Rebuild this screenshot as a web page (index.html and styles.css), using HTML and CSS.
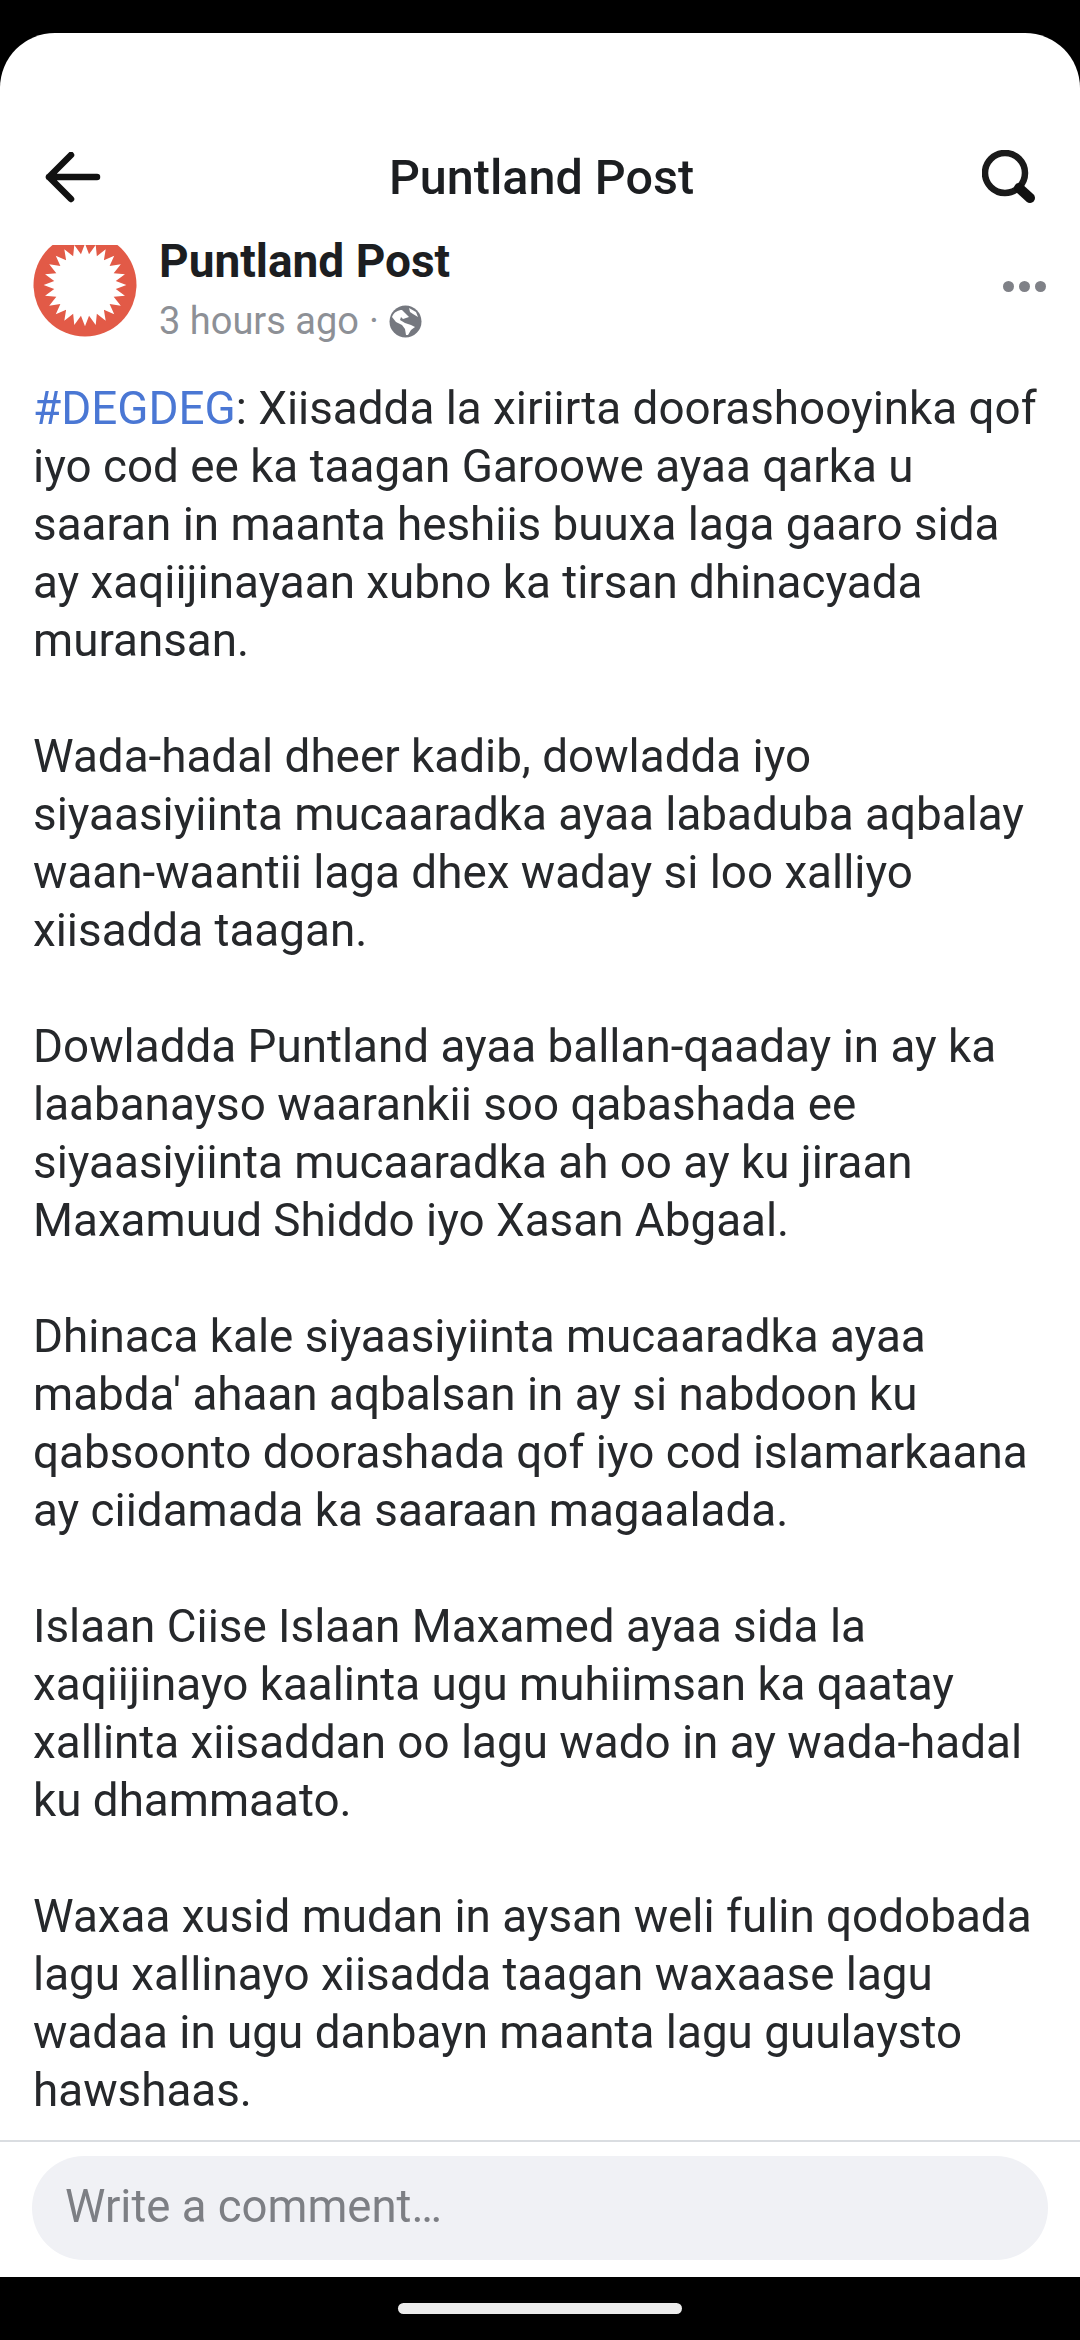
FILE: index.html
```html
<!DOCTYPE html>
<html lang="so">
<head>
<meta charset="utf-8">
<title>Puntland Post</title>
<link rel="stylesheet" href="styles.css">
</head>
<body>
<div class="phone">
  <div class="top-bar"></div>
  <main class="screen">
    <header class="nav">
      <svg class="nav-icon" width="56" height="52" viewBox="0 0 56 52"><path d="M4 25H52M26 3 4 25 26 47" fill="none" stroke="#111" stroke-width="6.500" stroke-linecap="round" stroke-linejoin="round"/></svg>
      <h1 class="nav-title">Puntland Post</h1>
      <svg class="nav-icon" width="54" height="56" viewBox="0 0 54 56"><circle cx="23" cy="23" r="20" fill="none" stroke="#1a1a1a" stroke-width="6.500"/><path d="M37 38 48 48" stroke="#111" stroke-width="10" stroke-linecap="round"/></svg>
    </header>
    <section class="author">
      <div class="avatar">
        <svg width="104" height="104" viewBox="-52 -52 104 104"><circle r="51.500" fill="#e25a47"/><polygon class="star" fill="#fff" points="44,0 32.700,4.300 42.500,11.400 30.500,12.600 38.100,22 26.200,20.100 31.100,31.100 20.100,26.200 22,38.100 12.600,30.500 11.400,42.500 4.300,32.700 0,44 -4.300,32.700 -11.400,42.500 -12.600,30.500 -22,38.100 -20.100,26.200 -31.100,31.100 -26.200,20.100 -38.100,22 -30.500,12.600 -42.500,11.400 -32.700,4.300 -44,0 -32.700,-4.300 -42.500,-11.400 -30.500,-12.600 -38.100,-22 -26.200,-20.100 -31.100,-31.100 -20.100,-26.200 -22,-38.100 -12.600,-30.500 -11.400,-42.500 -4.300,-32.700 0,-44 4.300,-32.700 11.400,-42.500 12.600,-30.500 22,-38.100 20.100,-26.200 31.100,-31.100 26.200,-20.100 38.100,-22 30.500,-12.600 42.500,-11.400 32.700,-4.300"/></svg>
      </div>
      <div class="author-info">
        <div class="author-name">Puntland Post</div>
        <div class="author-meta"><span>3 hours ago</span><span class="dot">·</span>
          <svg width="33" height="33" viewBox="0 0 33 33"><circle cx="16.500" cy="16.500" r="16" fill="#75787f"/><path d="M3 12C5 7 9 5 13 5L16 8 20 12 14 14 12 12 11 15 16 18 22 20 26 22 22 25 19 30 17 30 16 24 13 20 7 17ZM20 3 27 7 29 12 24 9 21 7Z" fill="#fff"/></svg>
        </div>
      </div>
      <div class="more"><i></i><i></i><i></i></div>
    </section>
    <article class="post">
      <p><a class="tag">#DEGDEG</a>: Xiisadda la xiriirta doorashooyinka qof<br>iyo cod ee ka taagan Garoowe ayaa qarka u<br>saaran in maanta heshiis buuxa laga gaaro sida<br>ay xaqiijinayaan xubno ka tirsan dhinacyada<br>muransan.</p>
      <p>Wada-hadal dheer kadib, dowladda iyo<br>siyaasiyiinta mucaaradka ayaa labaduba aqbalay<br>waan-waantii laga dhex waday si loo xalliyo<br>xiisadda taagan.</p>
      <p>Dowladda Puntland ayaa ballan-qaaday in ay ka<br>laabanayso waarankii soo qabashada ee<br>siyaasiyiinta mucaaradka ah oo ay ku jiraan<br>Maxamuud Shiddo iyo Xasan Abgaal.</p>
      <p>Dhinaca kale siyaasiyiinta mucaaradka ayaa<br>mabda' ahaan aqbalsan in ay si nabdoon ku<br>qabsoonto doorashada qof iyo cod islamarkaana<br>ay ciidamada ka saaraan magaalada.</p>
      <p>Islaan Ciise Islaan Maxamed ayaa sida la<br>xaqiijinayo kaalinta ugu muhiimsan ka qaatay<br>xallinta xiisaddan oo lagu wado in ay wada-hadal<br>ku dhammaato.</p>
      <p>Waxaa xusid mudan in aysan weli fulin qodobada<br>lagu xallinayo xiisadda taagan waxaase lagu<br>wadaa in ugu danbayn maanta lagu guulaysto<br>hawshaas.</p>
    </article>
    <footer class="composer">
      <div class="comment-box">Write a comment…</div>
    </footer>
  </main>
  <div class="home-bar"><span class="home-pill"></span></div>
</div>
</body>
</html>
```
FILE: styles.css
```css
* { box-sizing: border-box; }
html, body { margin: 0; padding: 0; background: #000; }
body { font-family: Roboto, "Liberation Sans", sans-serif; }
.phone { width: 1080px; height: 2340px; display: flex; flex-direction: column; background: #000; overflow: hidden; }
.top-bar { height: 33px; flex: none; }
.screen { flex: 1; display: flex; flex-direction: column; background: #fff; border-radius: 55px 55px 0 0; min-height: 0; filter: blur(0.6px); }
.nav { height: 110px; margin-top: 90px; padding: 0 44px 0 45px; display: flex; align-items: center; justify-content: space-between; flex: none; }
.nav-title { margin: 0; font-size: 48.500px; font-weight: 500; color: #1c1e21; line-height: 60px; }
.author { display: flex; height: 108px; padding: 0 33px 0 33px; margin-top: 12px; flex: none; }
.avatar { width: 104px; height: 92px; overflow: hidden; flex: none; margin-right: 22px; }
.avatar svg { display: block; margin-top: -12px; }
.star { transform: scale(0.94); }
.author-info { flex: 1; margin-top: -12px; }
.author-name { font-size: 46px; font-weight: 700; color: #1c1e21; line-height: 56px; }
.author-meta { display: flex; align-items: center; font-size: 38px; color: #8d9096; line-height: 52px; margin-top: 6px; }
.dot { margin: 0 10px 0 10px; }
.more { display: flex; gap: 5px; margin-top: 36px; margin-right: 1px; }
.more i { width: 11px; height: 11px; border-radius: 50%; background: #7f8187; display: block; }
.post { flex: 1; padding: 0 33px; font-size: 45.800px; line-height: 58px; color: #26282b; margin-top: 27px; min-height: 0; }
.post p { margin: 0 0 58px; }
.post p:last-child { margin-bottom: 0; }
.tag { color: #4a77d4; }
.composer { flex: none; border-top: 2px solid #dadde1; padding: 14px 32px 17px; }
.comment-box { height: 104px; border-radius: 52px; background: #f0f1f5; color: #7d7f84; font-size: 45.500px; line-height: 102px; padding: 0 33px; }
.home-bar { height: 63px; flex: none; display: flex; justify-content: center; padding-top: 26px; }
.home-pill { width: 284px; height: 11px; border-radius: 5.500px; background: #ececec; }
```
